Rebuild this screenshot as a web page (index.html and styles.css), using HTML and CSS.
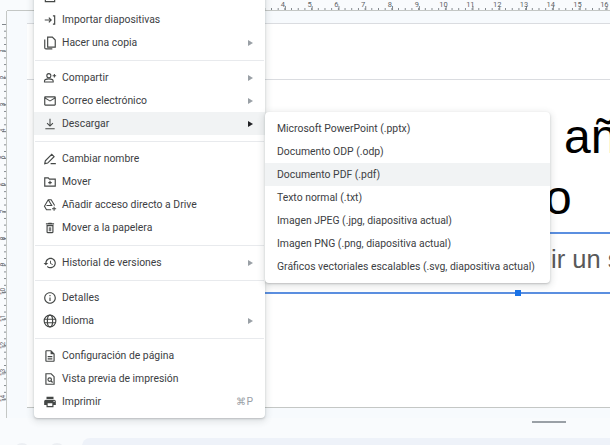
FILE: index.html
```html
<!DOCTYPE html>
<html lang="es">
<head>
    <meta charset="UTF-8">
    <meta name="viewport" content="width=device-width, initial-scale=1.0">
    <title>Archivo - Descargar</title>
    <link rel="stylesheet" href="styles.css">
</head>
<body>
    <div class="editor">
        <div class="corner"></div>
        <div class="ruler-top">
            <span>1</span><span>2</span><span>3</span><span>4</span><span>5</span><span>6</span><span>7</span><span>8</span><span>9</span><span>10</span><span>11</span><span>12</span><span>13</span><span>14</span><span>15</span><span>16</span>
        </div>
        <div class="ruler-left">
            <span>1</span><span>2</span><span>3</span><span>4</span><span>5</span><span>6</span><span>7</span><span>8</span><span>9</span><span>10</span><span>11</span><span>12</span><span>13</span><span>14</span>
        </div>
        <div class="workspace">
            <div class="slide">
                <div class="guide-line"></div>
                <div class="title-box">
                    <p class="title-line">añ</p>
                    <p class="title-line title-second">o</p>
                </div>
                <div class="subtitle-box">
                    <p class="subtitle">ir un s</p>
                    <span class="handle"></span>
                </div>
            </div>
        </div>
    </div>

    <div class="footer">
        <div class="footer-dash"><span></span></div>
        <div class="footer-bottom">
            <span class="dot"></span>
            <span class="dot"></span>
            <div class="notes-bar"></div>
        </div>
    </div>

    <div class="menu file-menu">
        <div class="item">
            <svg class="icon" viewBox="0 0 24 24"><path d="M4 4h13l3 3v13H4z" fill="none" stroke="currentColor" stroke-width="2"/></svg>
            <span class="label">Abrir</span>
            <span class="shortcut">⌘O</span>
        </div>
        <div class="item">
            <svg class="icon" viewBox="0 0 24 24"><path d="M3 12h11M10 8l4 4-4 4M17 5h3v14h-3" fill="none" stroke="currentColor" stroke-width="2"/></svg>
            <span class="label">Importar diapositivas</span>
        </div>
        <div class="item">
            <svg class="icon" viewBox="0 0 24 24"><path d="M3 6v14c0 1 .9 2 2 2h11" fill="none" stroke="currentColor" stroke-width="2"/><path d="M8 2h8l5 5v12H8z" fill="none" stroke="currentColor" stroke-width="2"/></svg>
            <span class="label">Hacer una copia</span>
            <span class="arrow"></span>
        </div>
        <div class="sep"></div>
        <div class="item">
            <svg class="icon" viewBox="0 0 24 24"><g fill="none" stroke="currentColor" stroke-width="1.800"><circle cx="10" cy="8" r="3.500"/><path d="M2.500 19v-1.500c0-2.500 4-4 7.500-4s7.500 1.500 7.500 4V19z"/><path d="M19.500 5v6M16.500 8h6"/></g></svg>
            <span class="label">Compartir</span>
            <span class="arrow"></span>
        </div>
        <div class="item">
            <svg class="icon" viewBox="0 0 24 24"><path fill="currentColor" d="M20 4H4c-1.100 0-2 .9-2 2v12c0 1.100.9 2 2 2h16c1.100 0 2-.9 2-2V6c0-1.100-.9-2-2-2zm0 14H4V8l8 5 8-5v10zm-8-7L4 6h16l-8 5z"/></svg>
            <span class="label">Correo electrónico</span>
            <span class="arrow"></span>
        </div>
        <div class="item active">
            <svg class="icon" viewBox="0 0 24 24"><path d="M12 3v12M7 10.500l5 5 5-5M4 20h16" fill="none" stroke="currentColor" stroke-width="1.800"/></svg>
            <span class="label">Descargar</span>
            <span class="arrow arrow-dark"></span>
        </div>
        <div class="sep"></div>
        <div class="item">
            <svg class="icon" viewBox="0 0 24 24"><path d="M3 20l1-5L15 4l4 4L8 19zM13 20h9" fill="none" stroke="currentColor" stroke-width="2"/></svg>
            <span class="label">Cambiar nombre</span>
        </div>
        <div class="item">
            <svg class="icon" viewBox="0 0 24 24"><path d="M3 5h6l2 2h10v12H3z" fill="none" stroke="currentColor" stroke-width="2"/><path d="M12 10v6M9 13h6" fill="none" stroke="currentColor" stroke-width="2"/></svg>
            <span class="label">Mover</span>
        </div>
        <div class="item">
            <svg class="icon" viewBox="0 0 24 24"><g fill="none" stroke="currentColor" stroke-width="1.800"><path d="M9 3h5l6 10M9 3L2.500 14 6 20h8M9 3l6 10H6"/><path d="M19 15v7M15.500 18.500h7"/></g></svg>
            <span class="label">Añadir acceso directo a Drive</span>
        </div>
        <div class="item">
            <svg class="icon" viewBox="0 0 24 24"><path fill="currentColor" d="M6 19c0 1.100.9 2 2 2h8c1.100 0 2-.9 2-2V7H6v12zM8 9h8v10H8V9zm7.500-5l-1-1h-5l-1 1H5v2h14V4h-3.500z"/><path fill="currentColor" d="M10 10.500h1.500v7H10zM12.500 10.500H14v7h-1.500z"/></svg>
            <span class="label">Mover a la papelera</span>
        </div>
        <div class="sep"></div>
        <div class="item">
            <svg class="icon" viewBox="0 0 24 24"><path fill="currentColor" d="M13 3c-4.970 0-9 4.030-9 9H1l3.890 3.890.07.14L9 12H6c0-3.870 3.130-7 7-7s7 3.130 7 7-3.130 7-7 7c-1.930 0-3.680-.79-4.940-2.060l-1.420 1.420C8.270 19.990 10.510 21 13 21c4.970 0 9-4.030 9-9s-4.030-9-9-9zm-1 5v5l4.280 2.540.72-1.210-3.500-2.080V8H12z"/></svg>
            <span class="label">Historial de versiones</span>
            <span class="arrow"></span>
        </div>
        <div class="sep"></div>
        <div class="item">
            <svg class="icon" viewBox="0 0 24 24"><path fill="currentColor" d="M11 7h2v2h-2zm0 4h2v6h-2zm1-9C6.480 2 2 6.480 2 12s4.480 10 10 10 10-4.480 10-10S17.520 2 12 2zm0 18c-4.410 0-8-3.590-8-8s3.590-8 8-8 8 3.590 8 8-3.590 8-8 8z"/></svg>
            <span class="label">Detalles</span>
        </div>
        <div class="item">
            <svg class="icon" viewBox="0 0 24 24"><g fill="none" stroke="currentColor" stroke-width="2"><circle cx="12" cy="12" r="10"/><ellipse cx="12" cy="12" rx="4.500" ry="10"/><path d="M2.500 9h19M2.500 15h19"/></g></svg>
            <span class="label">Idioma</span>
            <span class="arrow"></span>
        </div>
        <div class="sep"></div>
        <div class="item">
            <svg class="icon" viewBox="0 0 24 24"><path fill="currentColor" d="M8 16h8v2H8zm0-4h8v2H8zm6-10H6c-1.100 0-2 .9-2 2v16c0 1.100.89 2 1.990 2H18c1.100 0 2-.9 2-2V8l-6-6zm4 18H6V4h7v5h5v11z"/></svg>
            <span class="label">Configuración de página</span>
        </div>
        <div class="item">
            <svg class="icon" viewBox="0 0 24 24"><path d="M14 3H5v18h14V8z" fill="none" stroke="currentColor" stroke-width="2"/><circle cx="11.500" cy="13" r="3" fill="none" stroke="currentColor" stroke-width="2"/><path d="M13.500 15l3 3" fill="none" stroke="currentColor" stroke-width="2"/></svg>
            <span class="label">Vista previa de impresión</span>
        </div>
        <div class="item">
            <svg class="icon" viewBox="0 0 24 24"><path fill="currentColor" d="M19 8H5c-1.660 0-3 1.340-3 3v6h4v4h12v-4h4v-6c0-1.660-1.340-3-3-3zm-3 11H8v-5h8v5zm3-7c-.55 0-1-.45-1-1s.45-1 1-1 1 .45 1 1-.45 1-1 1zm-1-9H6v4h12V3z"/></svg>
            <span class="label">Imprimir</span>
            <span class="shortcut">⌘P</span>
        </div>
    </div>

    <div class="menu sub-menu">
        <div class="item"><span class="label">Microsoft PowerPoint (.pptx)</span></div>
        <div class="item"><span class="label">Documento ODP (.odp)</span></div>
        <div class="item active"><span class="label">Documento PDF (.pdf)</span></div>
        <div class="item"><span class="label">Texto normal (.txt)</span></div>
        <div class="item"><span class="label">Imagen JPEG (.jpg, diapositiva actual)</span></div>
        <div class="item"><span class="label">Imagen PNG (.png, diapositiva actual)</span></div>
        <div class="item"><span class="label">Gráficos vectoriales escalables (.svg, diapositiva actual)</span></div>
    </div>
</body>
</html>
```

FILE: styles.css
```css
* {
    margin: 0;
    padding: 0;
    box-sizing: border-box;
}
html, body {
    height: 100%;
    overflow: hidden;
}
body {
    font-family: Roboto, Arial, sans-serif;
    background-color: #f9fbfd;
    color: #3c4043;
}

/* rulers and canvas */
.editor {
    display: grid;
    grid-template-columns: 7px 1fr;
    grid-template-rows: 11px 407px;
    height: 418px;
}
.ruler-top {
    display: flex;
    padding-left: 182px;
    border-bottom: 1px solid #c4c7c5;
    font-size: 7.5px;
    line-height: 9px;
    color: #5f6368;
    background-image:
        linear-gradient(to right, #80868b 1px, transparent 1px),
        linear-gradient(to right, #80868b 1px, transparent 1px);
    background-size: 26.8px 4px, 6.7px 2px;
    background-position: 9.9px bottom, 3.2px bottom;
    background-repeat: repeat-x;
    background-clip: content-box;
}
.ruler-top span {
    flex: 0 0 26.8px;
    text-align: center;
}
.ruler-left {
    display: flex;
    flex-direction: column;
    padding: 13px 0 14px;
    border-right: 1px solid #c4c7c5;
    font-size: 6.5px;
    line-height: 6px;
    color: #5f6368;
    background-image:
        linear-gradient(to bottom, #80868b 1px, transparent 1px),
        linear-gradient(to bottom, #80868b 1px, transparent 1px);
    background-size: 4px 26.8px, 2px 6.7px;
    background-position: right 13px, right 13px;
    background-repeat: repeat-y;
    background-clip: content-box;
}
.ruler-left span {
    flex: 0 0 26.8px;
    display: flex;
    align-items: center;
    justify-content: center;
    width: 6px;
    transform: rotate(-90deg);
}
.ruler-left span:first-child {
    margin-top: 13px;
}
.workspace {
    padding-top: 12px;
    padding-left: 20px;
    background-color: #f7fafd;
    overflow: hidden;
}
.slide {
    position: relative;
    height: 385px;
    width: 900px;
    background-color: #fff;
    border-top: 1px solid #dadce0;
    border-bottom: 1px solid #c4c7c5;
}

/* slide content sits on a free canvas */
.guide-line {
    position: absolute;
    left: 0;
    right: 0;
    top: 55px;
    height: 1px;
    background-color: #dadce0;
}
.title-box {
    position: absolute;
    left: 100px;
    top: 83px;
    width: 760px;
    height: 127px;
    border-bottom: 2px solid #5b8fe0;
    font-family: "Liberation Sans", Arial, sans-serif;
    font-size: 48px;
    line-height: 59px;
    color: #000;
}
.title-line {
    padding-left: 437px;
}
.title-second {
    padding-left: 418px;
    padding-top: 2px;
}
.subtitle-box {
    position: absolute;
    left: 100px;
    top: 210px;
    width: 760px;
    height: 60px;
    border-bottom: 2px solid #5b8fe0;
    font-family: "Liberation Sans", Arial, sans-serif;
    font-size: 25.5px;
    line-height: 28px;
    color: #595959;
}
.subtitle {
    padding-left: 424px;
    padding-top: 11px;
}
.handle {
    position: absolute;
    left: 388px;
    bottom: -4px;
    width: 6px;
    height: 6px;
    background-color: #1a73e8;
}

/* bottom of the window */
.footer {
    height: 27px;
    display: flex;
    flex-direction: column;
    justify-content: space-between;
}
.footer-dash {
    display: flex;
    justify-content: flex-end;
    padding: 3px 44px 0 0;
}
.footer-dash span {
    width: 34px;
    height: 2px;
    background-color: #9aa0a6;
}
.footer-bottom {
    display: flex;
    align-items: flex-start;
    height: 7px;
    overflow: hidden;
    padding-left: 14px;
    gap: 19px;
}
.dot {
    flex: none;
    width: 16px;
    height: 16px;
    margin-top: 5px;
    border-radius: 50%;
    background-color: #eceff3;
}
.notes-bar {
    flex: 1;
    height: 20px;
    margin-left: -2px;
    border-radius: 8px 0 0 0;
    background-color: #eef2f9;
}

/* menus */
.menu {
    position: absolute;
    background-color: #fff;
    border-radius: 4px;
    box-shadow: 0 1px 2px rgba(60, 64, 67, .25), 0 2px 6px 2px rgba(60, 64, 67, .12);
    font-size: 10.4px;
}
.file-menu {
    left: 34px;
    top: -19px;
    width: 231px;
    padding: 4px 0 5px;
}
.sub-menu {
    left: 265px;
    top: 112px;
    width: 285px;
    padding: 5px 0;
}
.item {
    display: flex;
    align-items: center;
    height: 23px;
    padding: 0 12px 0 9px;
}
.sub-menu .item {
    padding-left: 12px;
}
.item.active {
    background-color: #f1f3f4;
}
.icon {
    flex: none;
    width: 14px;
    height: 14px;
    margin-right: 5px;
    color: #444746;
}
.label {
    flex: 1;
    white-space: nowrap;
}
.shortcut {
    color: #9aa0a6;
}
.arrow {
    width: 0;
    height: 0;
    border-left: 5px solid #9aa0a6;
    border-top: 3px solid transparent;
    border-bottom: 3px solid transparent;
}
.arrow-dark {
    border-left-color: #202124;
}
.sep {
    height: 1px;
    margin: 6px 1px 5px;
    background-color: #e8eaed;
}
```
